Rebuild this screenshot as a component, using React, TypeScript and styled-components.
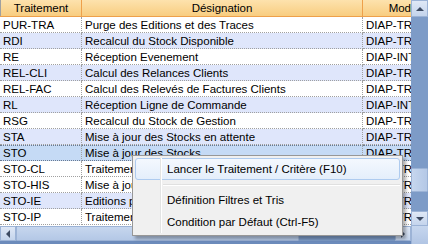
import React from 'react';
import styled, { createGlobalStyle } from 'styled-components';

const GlobalStyle = createGlobalStyle`
  body {
    margin: 0;
    overflow: hidden;
    background: #fff;
  }
`

const Frame = styled.div`
  position: relative;
  display: grid;
  grid-template-columns: 411px 17px;
  grid-template-rows: 226px 18px;
  width: 428px;
  height: 244px;
  font-family: 'Liberation Sans', Arial, sans-serif;
  font-size: 11px;
  color: #000;
  overflow: hidden;
`

const Grid = styled.div`
  display: flex;
  flex-direction: column;
  overflow: hidden;
  background: #fff;
`

const HeaderRow = styled.div`
  display: grid;
  grid-template-columns: 82px 281px 90px;
  height: 16px;
  flex-shrink: 0;
  background: linear-gradient(#fde2ad, #f8cd80);
  border-bottom: 1px solid #eea04a;
`

const HeaderCell = styled.div<{ $first?: boolean }>`
  display: flex;
  align-items: center;
  justify-content: center;
  border-right: 1px solid #eea04a;
  border-left: ${p => (p.$first ? '1px solid #a0a0a0' : 'none')};
  white-space: nowrap;
  overflow: hidden;
  font-size: 11.5px;
`

const Row = styled.div<{ $bg: string }>`
  display: grid;
  grid-template-columns: 82px 281px 90px;
  height: 16px;
  flex-shrink: 0;
  background: ${p => p.$bg};
`

const Cell = styled.div<{ $selected?: boolean }>`
  display: flex;
  align-items: center;
  padding-left: 3px;
  border-right: 1px dotted #a0a0a0;
  border-bottom: 1px dotted ${p => (p.$selected ? '#6a7a90' : '#a0a0a0')};
  border-top: ${p => (p.$selected ? '1px dotted #6a7a90' : 'none')};
  white-space: nowrap;
  overflow: hidden;
  font-size: 11.5px;
`

const VScroll = styled.div`
  display: flex;
  flex-direction: column;
  background: #7d9bc7;
`

const HScroll = styled.div`
  display: flex;
  height: 15px;
  background: #7d9bc7;
  border-bottom: 3px solid #6c8bbb;
`

const ArrowButton = styled.div<{ $w: number; $h: number }>`
  display: flex;
  align-items: center;
  justify-content: center;
  width: ${p => p.$w}px;
  height: ${p => p.$h}px;
  flex-shrink: 0;
  box-sizing: border-box;
  background: linear-gradient(#dfe8f6, #c4d4ec);
  border: 1px solid #9cb3d6;
`

const Track = styled.div<{ $vertical?: boolean }>`
  display: flex;
  flex-direction: ${p => (p.$vertical ? 'column' : 'row')};
  flex: 1;
`

const Thumb = styled.div<{ $vertical?: boolean }>`
  box-sizing: border-box;
  background: ${p => (p.$vertical ? 'linear-gradient(90deg, #c6d6ee, #b4c8e6)' : 'linear-gradient(#c6d6ee, #b4c8e6)')};
  border: 1px solid #9cb3d6;
  border-radius: 1px;
`

const Corner = styled.div`
  background: linear-gradient(#c6d6ee, #b1c5e4);
  border-left: 1px solid #9cb3d6;
`

const Menu = styled.div`
  position: absolute;
  left: 132px;
  top: 155px;
  width: 271px;
  box-sizing: border-box;
  padding: 2px;
  display: flex;
  flex-direction: column;
  background: #f0f0f0;
  border: 1px solid #979797;
  box-shadow: 3px 3px 3px rgba(0, 0, 0, 0.3);
  font-family: 'Liberation Sans', Arial, sans-serif;
  font-size: 11.5px;
`

const MenuItem = styled.div<{ $active?: boolean }>`
  display: flex;
  align-items: center;
  height: 22px;
  box-sizing: border-box;
  padding-left: 31px;
  border: 1px solid ${p => (p.$active ? '#aecbef' : 'transparent')};
  border-radius: 3px;
  background: ${p => (p.$active ? 'linear-gradient(#f4f8fe, #e4eefb)' : 'transparent')};
  white-space: nowrap;
`

const Separator = styled.div`
  height: 9px;
  display: flex;
  align-items: center;
  padding-left: 28px;
  &::after {
    content: '';
    flex: 1;
    height: 1px;
    background: #e0e0e0;
    border-bottom: 1px solid #fff;
  }
`

const Gutter = styled.div`
  position: absolute;
  left: 27px;
  top: 2px;
  bottom: 2px;
  width: 1px;
  background: #e2e3e3;
  border-right: 1px solid #fff;
`

const Arrow: React.FC<{ dir: 'up' | 'down' | 'left' | 'right' }> = ({ dir }) => {
  const pts = {
    up: '0,4 4,0 8,4',
    down: '0,0 8,0 4,4',
    left: '4,0 4,8 0,4',
    right: '0,0 0,8 4,4',
  }[dir]
  const vert = dir === 'up' || dir === 'down'
  return (
    <svg width={vert ? 8 : 4} height={vert ? 4 : 8}>
      <polygon points={pts} fill="#3d4b63" />
    </svg>
  )
}

const rows = [
  ['PUR-TRA', 'Purge des Editions et des Traces', 'DIAP-TR-PUR', '#fff'],
  ['RDI', 'Recalcul du Stock Disponible', 'DIAP-TR-STK', '#dfe6fb'],
  ['RE', 'Réception Evenement', 'DIAP-INT-REC', '#fff'],
  ['REL-CLI', 'Calcul des Relances Clients', 'DIAP-TR-CLI', '#dfe6fb'],
  ['REL-FAC', 'Calcul des Relevés de Factures Clients', 'DIAP-TR-FAC', '#fff'],
  ['RL', 'Réception Ligne de Commande', 'DIAP-INT-CDE', '#dfe6fb'],
  ['RSG', 'Recalcul du Stock de Gestion', 'DIAP-TR-STK', '#fff'],
  ['STA', 'Mise à jour des Stocks en attente', 'DIAP-TR-STK', '#dfe6fb'],
  ['STO', 'Mise à jour des Stocks', 'DIAP-TR-STK', '#c5daf5'],
  ['STO-CL', 'Traitement des Clôtures de Stock', 'DIAP-TR-STK', '#fff'],
  ['STO-HIS', 'Mise à jour Historique des Stocks', 'DIAP-TR-STK', '#fff'],
  ['STO-IE', 'Editions pour Inventaire Externe', 'DIAP-TR-STK', '#dfe6fb'],
  ['STO-IP', 'Traitement Inventaire Permanent', 'DIAP-TR-STK', '#fff'],
]

const App: React.FC = () => {
  return (
    <>
      <GlobalStyle />
      <Frame>
        <Grid>
          <HeaderRow>
            <HeaderCell $first>Traitement</HeaderCell>
            <HeaderCell>Désignation</HeaderCell>
            <HeaderCell>Module</HeaderCell>
          </HeaderRow>
          {rows.map(([code, label, mod, bg]) => {
            const selected = code === 'STO'
            return (
              <Row key={code} $bg={bg}>
                <Cell $selected={selected}>{code}</Cell>
                <Cell $selected={selected}>{label}</Cell>
                <Cell $selected={selected}>{mod}</Cell>
              </Row>
            )
          })}
        </Grid>
        <VScroll>
          <ArrowButton $w={17} $h={17}><Arrow dir="up" /></ArrowButton>
          <Track $vertical>
            <Thumb $vertical style={{ marginTop: 151, height: 24 }} />
          </Track>
          <ArrowButton $w={17} $h={15}><Arrow dir="down" /></ArrowButton>
        </VScroll>
        <HScroll>
          <ArrowButton $w={16} $h={15}><Arrow dir="left" /></ArrowButton>
          <Track>
            <Thumb style={{ width: 283 }} />
          </Track>
          <ArrowButton $w={16} $h={15}><Arrow dir="right" /></ArrowButton>
        </HScroll>
        <Corner />
        <Menu>
          <Gutter />
          <MenuItem $active>Lancer le Traitement / Critère (F10)</MenuItem>
          <Separator />
          <MenuItem>Définition Filtres et Tris</MenuItem>
          <MenuItem>Condition par Défaut (Ctrl-F5)</MenuItem>
        </Menu>
      </Frame>
    </>
  )
}

export default App;
